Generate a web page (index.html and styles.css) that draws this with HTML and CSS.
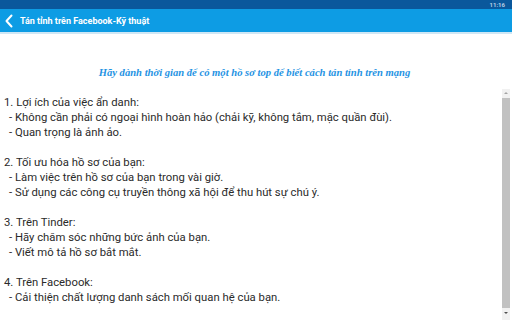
FILE: index.html
```html
<!DOCTYPE html>
<html lang="vi">
<head>
<meta charset="utf-8">
<link rel="stylesheet" href="styles.css">
</head>
<body>
<div class="screen">
  <div class="status-bar"><span class="time">11:16</span></div>
  <div class="app-bar">
    <svg class="back" width="10" height="14" viewBox="0 0 10 14"><path d="M7.5 1.5 L2.5 7 L7.5 12.5" fill="none" stroke="#fff" stroke-width="2" stroke-linecap="round" stroke-linejoin="round"/></svg>
    <span class="title">Tán tỉnh trên Facebook-Kỹ thuật</span>
  </div>
  <div class="app-bar-line"></div>
  <div class="subtitle">Hãy dành thời gian để có một hồ sơ top để biết cách tán tỉnh trên mạng</div>
  <div class="content-row">
    <div class="content">
      <p>1. Lợi ích của việc ẩn danh:</p>
      <p class="item">- Không cần phải có ngoại hình hoàn hảo (chải kỹ, không tắm, mặc quần đùi).</p>
      <p class="item">- Quan trọng là ảnh ảo.</p>
      <p class="blank"></p>
      <p>2. Tối ưu hóa hồ sơ của bạn:</p>
      <p class="item">- Làm việc trên hồ sơ của bạn trong vài giờ.</p>
      <p class="item">- Sử dụng các công cụ truyền thông xã hội để thu hút sự chú ý.</p>
      <p class="blank"></p>
      <p>3. Trên Tinder:</p>
      <p class="item">- Hãy chăm sóc những bức ảnh của bạn.</p>
      <p class="item">- Viết mô tả hồ sơ bắt mắt.</p>
      <p class="blank"></p>
      <p>4. Trên Facebook:</p>
      <p class="item">- Cải thiện chất lượng danh sách mối quan hệ của bạn.</p>
    </div>
    <div class="scrollbar">
      <div class="arrow up"></div>
      <div class="thumb"></div>
      <div class="arrow down"></div>
    </div>
  </div>
</div>
</body>
</html>
```
FILE: styles.css
```css
html, body {
  margin: 0;
  padding: 0;
  background: #fff;
}
.screen {
  width: 512px;
  height: 320px;
  overflow: hidden;
  display: flex;
  flex-direction: column;
  font-family: Roboto, "Noto Sans", sans-serif;
}
.status-bar {
  height: 9px;
  background: #0a589c;
  display: flex;
  justify-content: flex-end;
  align-items: center;
  padding-right: 7px;
}
.time {
  font-size: 6px;
  font-weight: bold;
  color: #b9cfe4;
  line-height: 6px;
}
.app-bar {
  height: 23px;
  background: #0d9ce4;
  display: flex;
  align-items: center;
  padding-left: 4px;
}
.back {
  margin-right: 6px;
}
.title {
  color: #fff;
  font-size: 9px;
  font-weight: bold;
}
.app-bar-line {
  height: 2px;
  background: #cfe7f5;
}
.subtitle {
  margin-top: 33px;
  text-align: center;
  font-family: "Liberation Serif", serif;
  font-style: italic;
  font-weight: bold;
  font-size: 10.6px;
  color: #1f93e3;
  line-height: 12px;
  padding-right: 3px;
}
.content-row {
  flex: 1;
  display: flex;
  margin-top: 10px;
  min-height: 0;
}
.content {
  flex: 1;
  padding: 6px 0 0 4px;
  color: #2a2a2a;
  font-size: 11.3px;
  line-height: 15px;
}
.content p {
  margin: 0;
  height: 15px;
  white-space: nowrap;
}
.content .item {
  padding-left: 5px;
}
.scrollbar {
  width: 8px;
  margin-right: 2px;
  background: #f1f1f1;
  display: flex;
  flex-direction: column;
  align-items: center;
  padding: 0 0 3px;
}
.arrow {
  height: 9px;
  width: 8px;
  position: relative;
}
.arrow::after {
  content: "";
  position: absolute;
  left: 2px;
  width: 0;
  height: 0;
  border-left: 2px solid transparent;
  border-right: 2px solid transparent;
}
.arrow.up::after {
  top: 3px;
  border-bottom: 2px solid #a3a3a3;
}
.arrow.down::after {
  top: 4px;
  border-top: 2px solid #505050;
}
.thumb {
  flex: 1;
  width: 8px;
  background: #c1c1c1;
}
```
